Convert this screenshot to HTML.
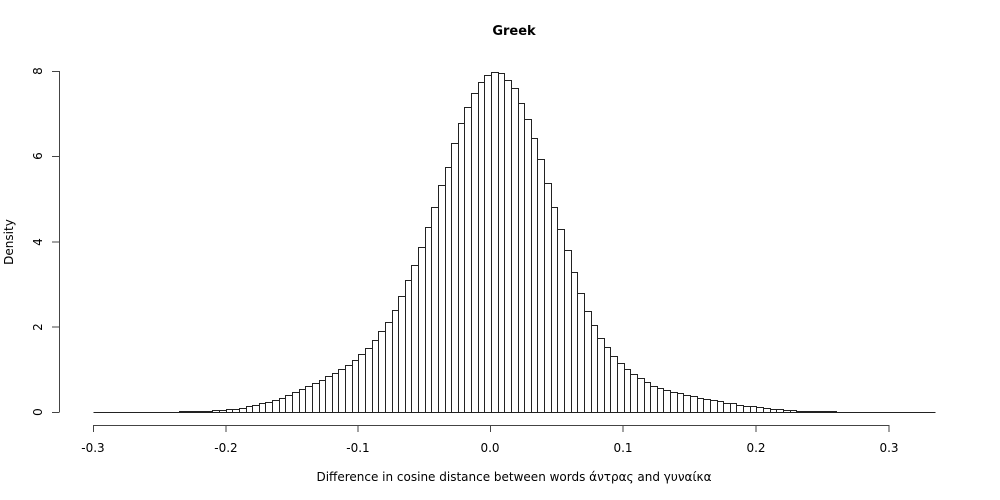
<!DOCTYPE html>
<html><head><meta charset="utf-8"><style>
html,body{margin:0;padding:0;background:#fff;}
svg{display:block;font-family:"DejaVu Sans","Liberation Sans",sans-serif;}
</style></head><body>
<svg id="s" width="1000" height="500" viewBox="0 0 1000 500" xmlns="http://www.w3.org/2000/svg">
<rect width="1000" height="500" fill="#fff"/>
<text x="514" y="35" font-size="13" font-weight="bold" text-anchor="middle">Greek</text>
<g stroke="#444" stroke-width="1" fill="none">
<line x1="59.5" y1="71" x2="59.5" y2="412"/>
<line x1="52" y1="71.5" x2="59.5" y2="71.5"/>
<line x1="52" y1="156.5" x2="59.5" y2="156.5"/>
<line x1="52" y1="242" x2="59.5" y2="242"/>
<line x1="52" y1="327" x2="59.5" y2="327"/>
<line x1="52" y1="412.5" x2="59.5" y2="412.5"/>
<line x1="93" y1="425.5" x2="889" y2="425.5"/>
<line x1="93.5" y1="425" x2="93.5" y2="432"/>
<line x1="226" y1="425" x2="226" y2="432"/>
<line x1="358" y1="425" x2="358" y2="432"/>
<line x1="490.5" y1="425" x2="490.5" y2="432"/>
<line x1="623" y1="425" x2="623" y2="432"/>
<line x1="756" y1="425" x2="756" y2="432"/>
<line x1="889" y1="425" x2="889" y2="432"/>
</g>
<g font-size="12" text-anchor="middle">
<text transform="translate(42,71) rotate(-90)">8</text>
<text transform="translate(42,156) rotate(-90)">6</text>
<text transform="translate(42,242) rotate(-90)">4</text>
<text transform="translate(42,327) rotate(-90)">2</text>
<text transform="translate(42,412) rotate(-90)">0</text>
<text transform="translate(13,242) rotate(-90)">Density</text>
<text x="93" y="452">-0.3</text>
<text x="226" y="452">-0.2</text>
<text x="358" y="452">-0.1</text>
<text x="490" y="452">0.0</text>
<text x="623" y="452">0.1</text>
<text x="756" y="452">0.2</text>
<text x="889" y="452">0.3</text>
<text x="514" y="481">Difference in cosine distance between words άντρας and γυναίκα</text>
</g>
<g id="bars" fill="none" stroke="#222" stroke-width="1"></g>
</svg>
<script>
var h=[0.001,0.001,0.001,0.002,0.002,0.002,0.003,0.003,0.004,0.005,0.006,0.007,0.009,0.012,0.016,0.02,0.025,0.03,0.038,0.048,0.06,0.08,0.1,0.13,0.16,0.2,0.24,0.28,0.34,0.4,0.46,0.53,0.6,0.67,0.75,0.84,0.92,1.0,1.1,1.22,1.35,1.5,1.7,1.9,2.1,2.4,2.72,3.1,3.45,3.88,4.33,4.8,5.32,5.75,6.32,6.78,7.15,7.48,7.75,7.9,7.97,7.95,7.78,7.6,7.25,6.88,6.42,5.93,5.38,4.82,4.3,3.8,3.28,2.8,2.37,2.05,1.74,1.53,1.32,1.16,1.0,0.88,0.8,0.7,0.62,0.56,0.52,0.47,0.44,0.4,0.37,0.34,0.31,0.28,0.25,0.22,0.2,0.17,0.15,0.13,0.11,0.09,0.08,0.06,0.05,0.04,0.035,0.03,0.025,0.02,0.016,0.013,0.01,0.008,0.007,0.006,0.005,0.004,0.004,0.003,0.003,0.002,0.002,0.002,0.002,0.001,0.001];
var g=document.getElementById('bars'),d='';
var w=796/120;
for(var k=0;k<h.length;k++){
 var x0=Math.round(93+k*w)+0.5,x1=Math.round(93+(k+1)*w)+0.5;
 var y=Math.round(412-h[k]*42.62)+0.5;
 d+='M'+x0+' 412.5V'+y+'H'+x1+'V412.5';
}
d+='M93.5 412.5H'+(Math.round(93+h.length*w)+0.5);
var p=document.createElementNS('http://www.w3.org/2000/svg','path');
p.setAttribute('d',d);g.appendChild(p);
</script>
</body></html>
